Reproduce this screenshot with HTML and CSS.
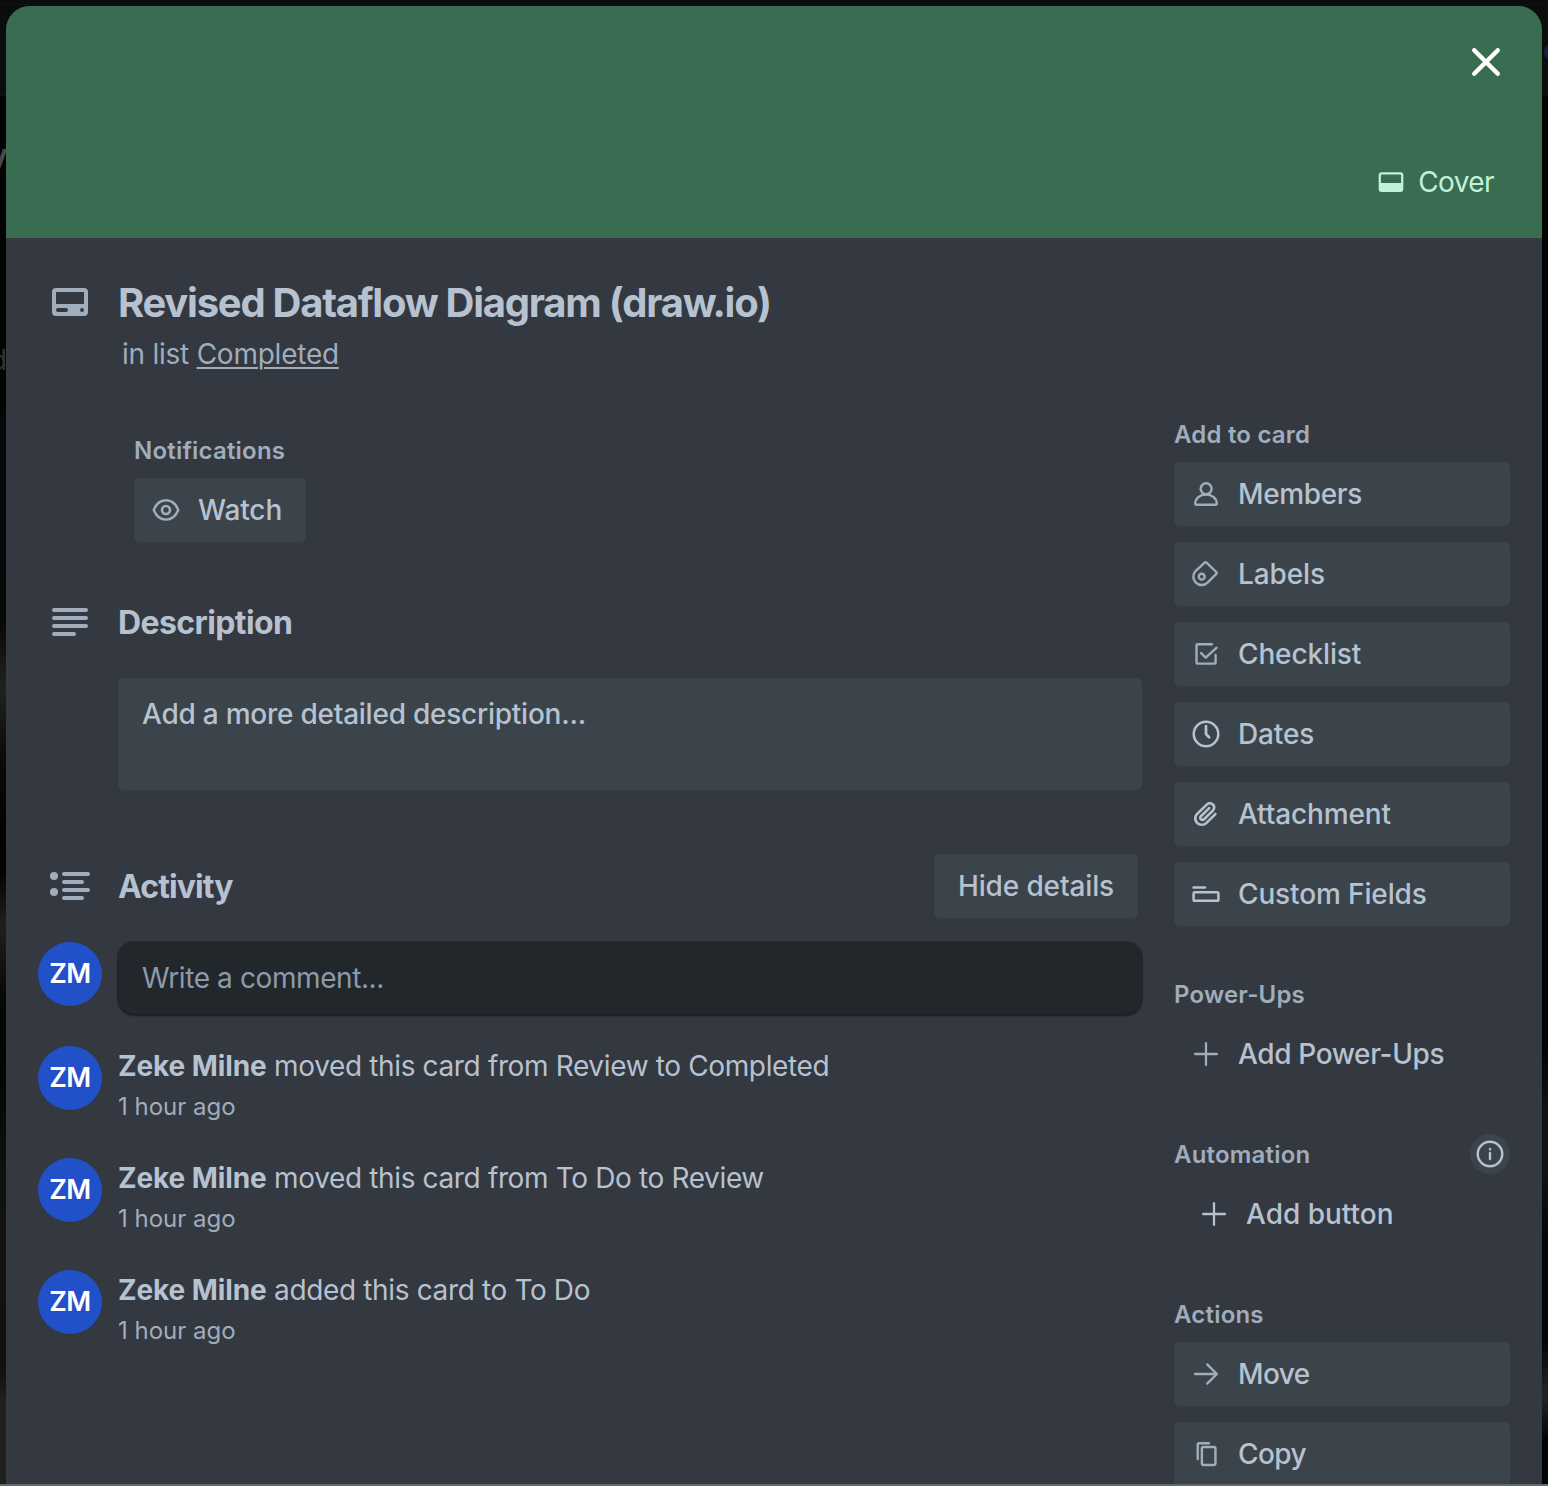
FILE: index.html
```html
<!DOCTYPE html>
<html lang="en">
<head>
<meta charset="utf-8">
<title>Revised Dataflow Diagram (draw.io)</title>
<link rel="stylesheet" href="styles.css">
</head>
<body>
<div class="backdrop" aria-hidden="true">
  <span class="peek peek-y">y</span>
  <span class="peek peek-d">d</span>
  <span class="peek-dot"></span>
</div>
<main class="modal">
  <header class="cover">
    <button class="close" aria-label="Close">
      <svg width="28" height="28" viewBox="0 0 28 28"><path d="M2.2 2.2 25.8 25.8M25.8 2.2 2.2 25.8" stroke-width="4.4"/></svg>
    </button>
    <button class="cover-btn">
      <svg class="icon" viewBox="0 0 24 24"><rect x="3.6" y="5.6" width="16.8" height="13" rx="1.4" stroke-width="1.7"/><path class="solid" d="M3.6 12.7h16.8v5.2q0 .8-.8.8H4.400q-.8 0-.8-.8z"/></svg>
      <span>Cover</span>
    </button>
  </header>

  <section class="card-head">
    <div class="gutter">
      <svg class="icon-lg" viewBox="0 0 24 24"><path class="solid" fill-rule="evenodd" d="M5 5h14a2 2 0 0 1 2 2v10a2 2 0 0 1-2 2H5a2 2 0 0 1-2-2V7a2 2 0 0 1 2-2zM5 7v6h14V7zM6 15a1 1 0 0 0 0 2h4a1 1 0 0 0 0-2zM18 15a1 1 0 0 0 0 2 1 1 0 0 0 0-2z"/></svg>
    </div>
    <div>
      <h1 class="title">Revised Dataflow Diagram (draw.io)</h1>
      <p class="in-list">in list <a class="list-link" href="#">Completed</a></p>
    </div>
  </section>

  <div class="columns">
    <div class="main">
      <section class="notifications">
        <h3 class="label">Notifications</h3>
        <button class="btn watch">
          <svg class="icon dim" viewBox="0 0 24 24"><path d="M2.800 12C4.600 7.400 8 4.700 12 4.700S19.400 7.400 21.200 12C19.400 16.600 16 19.200 12 19.200S4.600 16.600 2.800 12z" stroke-width="1.800"/><circle cx="12" cy="12" r="3" stroke-width="2"/></svg>
          <span>Watch</span>
        </button>
      </section>

      <section class="description">
        <div class="section-head">
          <div class="gutter">
            <svg class="icon-lg" viewBox="0 0 24 24"><path d="M4 6h16M4 10h16M4 14h16M4 18h10" stroke-width="2"/></svg>
          </div>
          <h2 class="heading">Description</h2>
        </div>
        <div class="desc-box">Add a more detailed description...</div>
      </section>

      <section class="activity">
        <div class="section-head">
          <div class="gutter">
            <svg class="icon-lg" viewBox="0 0 24 24"><path d="M9 6h12M9 10h9M9 14h12M9 18h9" stroke-width="2"/><circle class="solid" cx="4" cy="7" r="2"/><circle class="solid" cx="4" cy="15" r="2"/></svg>
          </div>
          <h2 class="heading heading-activity">Activity</h2>
          <button class="btn hide"><span>Hide details</span></button>
        </div>
        <div class="comment-row">
          <span class="avatar">ZM</span>
          <div class="comment">Write a comment...</div>
        </div>
        <div class="event">
          <span class="avatar">ZM</span>
          <div><p class="event-text"><b>Zeke Milne</b> moved this card from Review to Completed</p><p class="time">1 hour ago</p></div>
        </div>
        <div class="event">
          <span class="avatar">ZM</span>
          <div><p class="event-text"><b>Zeke Milne</b> moved this card from To Do to Review</p><p class="time">1 hour ago</p></div>
        </div>
        <div class="event">
          <span class="avatar">ZM</span>
          <div><p class="event-text"><b>Zeke Milne</b> added this card to To Do</p><p class="time">1 hour ago</p></div>
        </div>
      </section>
    </div>

    <aside class="sidebar">
      <section class="group">
        <h3 class="label">Add to card</h3>
        <button class="btn members">
          <svg class="icon dim" viewBox="0 0 24 24"><g stroke-width="1.800"><circle cx="12.100" cy="8" r="4.100"/><path d="M3.900 19.400C3.900 15.400 7.500 12.400 12 12.400s8.100 3 8.100 7q0 .7-.7.7H4.600q-.7 0-.7-.7z"/></g></svg>
          <span>Members</span>
        </button>
        <button class="btn">
          <svg class="icon dim" viewBox="0 0 24 24"><g stroke-width="1.800"><path d="M4.330 9.580 11 3.400q.7-.6 1.400 0l7.300 7.100q.7.700 0 1.400l-6.530 6.520A6.250 6.250 0 0 1 4.330 9.580z"/><circle cx="8.800" cy="14" r="2.200"/></g></svg>
          <span>Labels</span>
        </button>
        <button class="btn">
          <svg class="icon dim" viewBox="0 0 24 24"><path d="M16.400 4.700H5.600q-.7 0-.7.700v13.100q0 .700.700.700h12.900q.700 0 .700-.700V12.800M8.300 11.300l3.500 3.400L20 7.300" stroke-width="1.800"/></svg>
          <span>Checklist</span>
        </button>
        <button class="btn">
          <svg class="icon" viewBox="0 0 24 24"><circle cx="12" cy="12" r="9.200" stroke-width="1.900"/><path d="M12 6.200V11.700q0 .4.300.700L14.300 14.400" stroke-width="2.100"/></svg>
          <span>Dates</span>
        </button>
        <button class="btn">
          <svg class="icon" viewBox="0 0 24 24"><path class="fill" d="M11.6426 17.9647C10.1123 19.46 7.62736 19.4606 6.10092 17.9691C4.57505 16.478 4.57769 14.0467 6.10253 12.5566L13.2505 5.57184C14.1476 4.6952 15.5861 4.69251 16.4832 5.56921C17.3763 6.44184 17.3778 7.85135 16.4869 8.72199L9.78361 15.2722C9.53288 15.5172 9.12807 15.5163 8.86954 15.2636C8.61073 15.0107 8.60963 14.6158 8.86954 14.3618L15.0989 8.27463C15.4812 7.90109 15.4812 7.29546 15.0989 6.92192C14.7167 6.54838 14.0969 6.54838 13.7146 6.92192L7.48523 13.0091C6.45911 14.0118 6.46356 15.618 7.48523 16.6163C8.50674 17.6145 10.1511 17.6186 11.1679 16.6249L17.8712 10.0747C19.5274 8.45632 19.5244 5.83555 17.8676 4.2165C16.2047 2.59156 13.5266 2.59657 11.8662 4.21913L4.71822 11.2039C2.42951 13.4404 2.42555 17.083 4.71661 19.3218C7.00774 21.5606 10.7323 21.5597 13.0269 19.3174L19.7133 12.7837C20.0956 12.4101 20.0956 11.8045 19.7133 11.431C19.331 11.0574 18.7113 11.0574 18.329 11.431L11.6426 17.9647Z"/></svg>
          <span>Attachment</span>
        </button>
        <button class="btn">
          <svg class="icon" viewBox="0 0 24 24"><g stroke-width="1.900"><path d="M2.700 7.100h8.500"/><rect x="2.700" y="10.700" width="18.600" height="6.400" rx="1"/></g></svg>
          <span>Custom Fields</span>
        </button>
      </section>

      <section class="group">
        <h3 class="label">Power-Ups</h3>
        <button class="btn plain power">
          <svg class="icon dim" viewBox="0 0 24 24"><path d="M3.800 12h16.400M12 3.800v16.400" stroke-width="1.700"/></svg>
          <span>Add Power-Ups</span>
        </button>
      </section>

      <section class="group">
        <div class="label-row">
          <h3 class="label">Automation</h3>
          <span class="info"><svg class="icon" viewBox="0 0 24 24"><circle cx="12" cy="12" r="9.200" stroke-width="1.800"/><path d="M12 11.200v4.600M12 8.300v.1" stroke-width="1.800"/></svg></span>
        </div>
        <button class="btn plain inset">
          <svg class="icon" viewBox="0 0 24 24"><path d="M3.800 12h16.400M12 3.800v16.400" stroke-width="1.700"/></svg>
          <span>Add button</span>
        </button>
      </section>

      <section class="group">
        <h3 class="label">Actions</h3>
        <button class="btn move">
          <svg class="icon dim" viewBox="0 0 24 24"><path d="M3.800 12h16.300M12.900 4.800l7.200 7.200-7.200 7.200" stroke-width="1.800"/></svg>
          <span>Move</span>
        </button>
        <button class="btn move">
          <svg class="icon dim" viewBox="0 0 24 24"><g stroke-width="1.800"><path d="M14.200 3.900H6.800q-1 0-1 1V15.700"/><rect x="8.900" y="6.700" width="10.200" height="13.500" rx="1.200"/></g></svg>
          <span>Copy</span>
        </button>
      </section>
    </aside>
  </div>
</main>
</body>
</html>
```

FILE: styles.css
```css
* { box-sizing: border-box; }

html, body { height: 100%; }

body {
  margin: 0;
  padding: 6px 6px 2px;
  overflow: hidden;
  background: #020303;
  color: #b6c2cf;
  font-family: Inter, "Liberation Sans", sans-serif;
  font-size: 28px;
  line-height: 40px;
}

h1, h2, h3, p { margin: 0; }

button {
  padding: 0;
  border: 0;
  background: none;
  color: inherit;
  font: inherit;
}

svg {
  display: block;
  flex: none;
  overflow: visible;
  fill: none;
  stroke: currentColor;
  stroke-linecap: round;
  stroke-linejoin: round;
}

.solid, .fill { fill: currentColor; stroke: none; }
.icon { width: 32px; height: 32px; }
.icon-lg { width: 48px; height: 48px; }
.dim { color: #9fadbc; }

/* dimmed board behind the dialog */
.backdrop {
  position: absolute;
  inset: 0;
  overflow: hidden;
  background:
    linear-gradient(#63686d, #63686d) 0 100% / 100% 2px no-repeat,
    linear-gradient(#121315, #121315) 0 4px / 100% 1px no-repeat,
    linear-gradient(#121315, #121315) 0 95px / 100% 1px no-repeat,
    linear-gradient(#0b0c0e 0 95px, #020303 96px 1050px, #121211 1110px 1170px, #040504 1240px 1340px, #242423 1395px, #040404 1440px) 100% 0 / 6px 100% no-repeat,
    linear-gradient(#0b0c0e 0 95px, #020303 96px 400px, #050808 420px 560px, #080808 620px, #202220 690px, #0c0c0b 750px, #020202 830px, #030303 870px, #201f1b 925px, #060707 1000px, #030404 1060px, #101211 1180px, #121110 1370px, #1f1f1d 1400px);
}

.peek { position: absolute; color: #4a4a4a; font-size: 36px; }
.peek-y { left: -12px; top: 136px; font-size: 34px; font-weight: 600; }
.peek-d { left: -10px; top: 340px; font-size: 28px; color: #333; }
.peek-dot { position: absolute; left: 1544px; top: 44px; width: 16px; height: 16px; border-radius: 50%; background: #142246; }

.modal {
  position: relative;
  height: 100%;
  overflow: hidden;
  border-radius: 24px 24px 0 0;
  background: #343840;
}

.cover {
  display: flex;
  flex-direction: column;
  align-items: flex-end;
  justify-content: space-between;
  height: 232px;
  padding: 42px 42px 36px;
  background: #396d52;
  color: #c1f0dc;
}

.close { color: #fff; }

.cover-btn {
  display: flex;
  align-items: center;
  gap: 11px;
  padding-right: 6px;
  letter-spacing: -0.6px;
}

.card-head {
  display: flex;
  gap: 16px;
  height: 180px;
  padding: 40px 32px 0;
}

.gutter {
  display: flex;
  flex: none;
  justify-content: center;
  width: 64px;
  color: #9fadbc;
}

.title {
  padding-top: 1px;
  font-size: 40px;
  font-weight: 700;
  line-height: 48px;
  letter-spacing: -1.26px;
}

.in-list {
  margin-top: 7px;
  padding-left: 4px;
  color: #9fadbc;
  letter-spacing: -0.24px;
}
.list-link { color: inherit; text-underline-offset: 3px; text-decoration-thickness: 2px; }

.columns { display: flex; gap: 32px; padding: 0 32px; }
.main { flex: 1; padding-top: 16px; }
.sidebar { display: flex; flex: none; flex-direction: column; gap: 52px; width: 336px; }

.label {
  height: 32px;
  color: #9fadbc;
  font-size: 24px;
  font-weight: 600;
  line-height: 34px;
  letter-spacing: 0.2px;
}

.btn {
  display: flex;
  align-items: center;
  gap: 16px;
  width: 100%;
  height: 64px;
  padding: 0 16px;
  border-radius: 6px;
  background: #3c444b;
  font-weight: 500;
  letter-spacing: -0.13px;
  white-space: nowrap;
}

.members, .power { letter-spacing: -0.37px; }
.move { letter-spacing: -0.6px; }
.plain { background: none; }
.inset { padding-left: 24px; letter-spacing: 0; }

.group .label, .notifications .label { margin-bottom: 12px; }
.group .btn + .btn { margin-top: 16px; }

.label-row { display: flex; justify-content: space-between; height: 44px; }
.info {
  display: flex;
  align-items: center;
  justify-content: center;
  width: 40px;
  height: 40px;
  margin-top: -4px;
  border-radius: 50%;
  background: #3c444b;
}

.notifications { padding-left: 96px; }
.watch { width: 172px; }

.description { margin-top: 56px; }
.section-head { display: flex; align-items: center; gap: 16px; }
.heading {
  padding-top: 2px;
  font-size: 32px;
  font-weight: 650;
  line-height: 46px;
  letter-spacing: -0.6px;
}
.heading-activity { letter-spacing: -0.9px; }

.desc-box {
  height: 112px;
  margin: 32px 0 0 80px;
  padding: 16px 24px;
  border-radius: 6px;
  background: #3c444b;
  font-weight: 500;
  letter-spacing: -0.24px;
}

.activity { margin-top: 64px; }
.hide { justify-content: center; width: 204px; margin: 0 4px 0 auto; }

.comment-row { display: flex; gap: 16px; margin-top: 24px; }
.comment {
  flex: 1;
  height: 72px;
  padding: 16px 24px;
  border-radius: 16px;
  background: #22272b;
  box-shadow: 0 2px 2px #1c1f22, 0 0 0 1px #272b2f;
  color: #8c9bab;
  letter-spacing: -0.4px;
}

.avatar {
  flex: none;
  width: 64px;
  height: 64px;
  border-radius: 50%;
  background: #2250c8;
  color: #fff;
  font-size: 27px;
  font-weight: 600;
  line-height: 64px;
  letter-spacing: -0.5px;
  text-align: center;
}

.event { display: flex; gap: 16px; height: 80px; margin-top: 32px; }
.event-text { letter-spacing: -0.36px; }
.event b { font-weight: 700; letter-spacing: -0.1px; }
.time { padding-top: 1px; color: #9fadbc; font-size: 24px; }
```
